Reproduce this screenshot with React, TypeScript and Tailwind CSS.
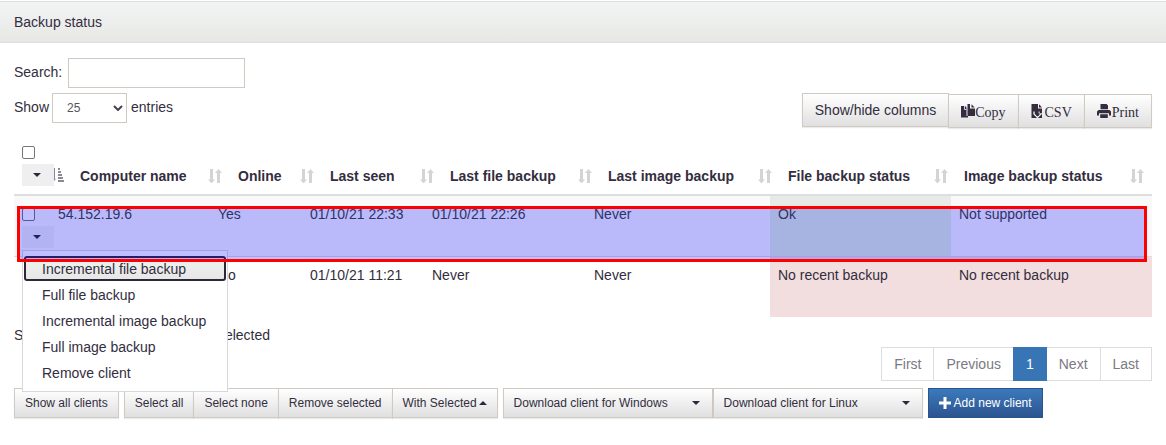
import type { ReactNode } from "react";

type Tone = "none" | "ok" | "alert";

interface Client {
  name: string;
  online: string;
  lastSeen: string;
  lastFile: string;
  lastImage: string;
  fileStatus: string;
  fileTone: Tone;
  imageStatus: string;
  imageTone: Tone;
}

const clients: Client[] = [
  {
    name: "54.152.19.6",
    online: "Yes",
    lastSeen: "01/10/21 22:33",
    lastFile: "01/10/21 22:26",
    lastImage: "Never",
    fileStatus: "Ok",
    fileTone: "ok",
    imageStatus: "Not supported",
    imageTone: "none",
  },
  {
    name: "",
    online: "No",
    lastSeen: "01/10/21 11:21",
    lastFile: "Never",
    lastImage: "Never",
    fileStatus: "No recent backup",
    fileTone: "alert",
    imageStatus: "No recent backup",
    imageTone: "alert",
  },
];

const headings = [
  "Computer name",
  "Online",
  "Last seen",
  "Last file backup",
  "Last image backup",
  "File backup status",
  "Image backup status",
];

const actions = [
  "Incremental file backup",
  "Full file backup",
  "Incremental image backup",
  "Full image backup",
  "Remove client",
];

const toneClass: Record<Tone, string> = {
  none: "",
  ok: "bg-linear-to-b from-[#e8eae7] from-[12px] to-[#dff0d8] to-[12px]",
  alert: "bg-[#f2dede]",
};

const raised =
  "border border-[#d0cac2] bg-linear-to-b from-white to-[#e0e0e0] shadow-[0_1px_1px_rgba(0,0,0,0.08)]";

function SortIcon() {
  return (
    <svg width="14" height="14" viewBox="0 0 14 14" fill="#d2d5d4" aria-hidden="true" className="shrink-0">
      <path d="M2 0h3v10.500h2L3.500 14.500 0 10.500h2z" />
      <path d="M9 14.500h3V4h2L10.500 0 7 4h2z" />
    </svg>
  );
}

function SortedIcon() {
  return (
    <svg width="14" height="14" viewBox="0 0 14 14" fill="#8d8791" aria-hidden="true" className="shrink-0">
      <path d="M4 0h1v11h1l-2 2z" />
      <path d="M8 0h2v2H8zM8 3h3v2H8zM8 6h4v2H8zM8 9h5v2H8zM8 12h6v2H8z" />
    </svg>
  );
}

function CopyIcon() {
  return (
    <svg width="14" height="14" viewBox="0 0 14 14" fill="#342d40" aria-hidden="true">
      <path d="M0 2h4l1.500 1.500V12H7v1.500H0z" />
      <path d="M6.500 0H9v4.500h5V12H6.500z" />
      <path d="M10.500 0.300L13.700 3.500h-3.200z" />
      <path d="M3.500 2v3.500H5.500" fill="none" stroke="#e8f0f8" strokeWidth="0.8" />
    </svg>
  );
}

function CsvIcon() {
  return (
    <svg width="14" height="14" viewBox="0 0 14 14" fill="#342d40" aria-hidden="true">
      <path d="M0.500 0H7v4.500h4V14H0.500z" />
      <path d="M8 0.300L11 3.500H8z" />
      <path
        d="M3 7.500v2.500l3.500 3.500L10 10h-2V7.500"
        fill="none"
        stroke="#f4f4f4"
        strokeWidth="1.3"
      />
      <path d="M5 7h2.500v2.500H9.500L6.500 12.500 3.800 9.500H5z" />
    </svg>
  );
}

function PrintIcon() {
  return (
    <svg width="15" height="14" viewBox="0 0 15 14" fill="#342d40" aria-hidden="true">
      <path d="M3.500 0h6L11 1.500V5.200H3.500zM1.500 6h11L14 7.500V11.500h-2V9.200H2v2.300H0V7.500zM3.200 10.200h7.600V14H3.200z" />
    </svg>
  );
}

function Caret({ up = false }: { up?: boolean }) {
  return (
    <svg width="8" height="4" viewBox="0 0 8 4" fill="#2c2838" aria-hidden="true" className="shrink-0">
      <path d={up ? "M0 4h8L4 0z" : "M0 0h8L4 4z"} />
    </svg>
  );
}

function RowTools({ label, tint }: { label: string; tint: string }) {
  return (
    <>
      <input
        type="checkbox"
        aria-label={`Select ${label}`}
        className="block size-[13px] shrink-0 appearance-none rounded-xs border border-[#767676] bg-white"
      />
      <button
        type="button"
        aria-label={`Actions for ${label}`}
        className={`flex h-[22px] w-8 shrink-0 items-center justify-center pr-0.5 ${tint}`}
      >
        <Caret />
      </button>
    </>
  );
}

function ToolButton({ icon, children }: { icon: ReactNode; children: ReactNode }) {
  return (
    <button
      type="button"
      className={`-ml-px flex h-[34px] items-center px-3 pt-1 font-['Liberation_Serif',serif] ${raised}`}
    >
      <span className="pb-1">{icon}</span>
      {children}
    </button>
  );
}

function SmallButton({ joined = false, children }: { joined?: boolean; children: ReactNode }) {
  return (
    <button
      type="button"
      className={`flex h-[30px] items-center px-2.5 text-xs ${raised} ${joined ? "-ml-px" : ""}`}
    >
      {children}
    </button>
  );
}

function DownloadButton({ children }: { children: ReactNode }) {
  return (
    <button
      type="button"
      className={`flex h-[30px] w-[210px] items-center justify-between pr-3 pl-2.5 text-xs ${raised}`}
    >
      {children}
      <Caret />
    </button>
  );
}

function ActionMenu() {
  return (
    <ul className="absolute top-[54px] left-2 z-10 w-[206px] border border-[#d5d7d9] bg-white py-[5px]">
      {actions.map((action, i) => (
        <li key={action} className="h-[26px]">
          <button
            type="button"
            className={
              i === 0
                ? "mx-px block h-[25px] w-[202px] rounded-[3px] border-2 border-[#2c2838] bg-linear-to-b from-[#f0f1f0] to-[#e6e8e6] pl-4 text-left leading-5"
                : "block h-[26px] w-full pl-[19px] text-left leading-[26px]"
            }
          >
            {action}
          </button>
        </li>
      ))}
    </ul>
  );
}

const headGrid =
  "grid grid-cols-[minmax(0,58fr)_minmax(0,158fr)_minmax(0,92fr)_minmax(0,120fr)_minmax(0,158fr)_minmax(0,180fr)_minmax(0,176fr)_minmax(0,196fr)]";
const bodyGrid =
  "grid grid-cols-[minmax(0,36fr)_minmax(0,160fr)_minmax(0,92fr)_minmax(0,122fr)_minmax(0,162fr)_minmax(0,184fr)_minmax(0,181fr)_minmax(0,201fr)]";

function ClientTable() {
  return (
    <div className="relative">
      <table className="block w-full">
        <thead className="block border-b-2 border-[#dcdfdf]">
          <tr className={headGrid}>
            <th className="flex items-end justify-between pr-2 pb-2 pl-2">
              <div className="flex flex-col gap-[5px]">
                <RowTools label="all clients" tint="bg-[#eeefee]" />
              </div>
              <span className="-ml-1 pb-1">
                <SortedIcon />
              </span>
            </th>
            {headings.map((heading) => (
              <th
                key={heading}
                scope="col"
                className="flex items-end justify-between px-2 pb-2 text-left font-bold whitespace-nowrap"
              >
                {heading}
                <span className="pb-[3px]">
                  <SortIcon />
                </span>
              </th>
            ))}
          </tr>
        </thead>
        <tbody className="block">
          {clients.map((client, i) => (
            <tr
              key={client.lastSeen}
              className={`${bodyGrid} ${i === 0 ? "h-[60px] bg-[#f9f9f9] text-[#3f4430]" : "h-[61px] border-t border-[#ddd]"}`}
            >
              <td className="flex flex-col gap-[5px] px-2 pt-3">
                <RowTools label={client.name} tint="bg-[#eeefee]" />
              </td>
              <td className="px-2 pt-2">{client.name}</td>
              <td className="px-2 pt-2">{client.online}</td>
              <td className="px-2 pt-2">{client.lastSeen}</td>
              <td className="px-2 pt-2">{client.lastFile}</td>
              <td className="px-2 pt-2">{client.lastImage}</td>
              <td className={`px-2 pt-2 ${toneClass[client.fileTone]}`}>{client.fileStatus}</td>
              <td className={`px-2 pt-2 ${toneClass[client.imageTone]}`}>{client.imageStatus}</td>
            </tr>
          ))}
        </tbody>
      </table>
      <div className="absolute inset-x-0 bottom-0 h-[121px]">
        <ActionMenu />
        <div className="pointer-events-none absolute top-2.5 right-[5px] left-[3px] z-20 h-14 border-3 border-[#fe0000] bg-[#0000ff]/25" />
      </div>
    </div>
  );
}

export default function App() {
  const pages = ["First", "Previous", "1", "Next", "Last"];
  return (
    <main className="min-h-screen bg-white pt-px font-['Liberation_Sans',Arial,sans-serif] text-sm leading-5 text-[#332d40]">
      <header className="border-y border-[#dcdfdf] bg-linear-to-b from-[#f2f4f3] to-[#e7e8e6] px-3.5 py-2.5">
        <h1>Backup status</h1>
      </header>

      <div className="px-3.5 pt-[15px]">
        <div className="flex items-start justify-between">
          <div className="flex flex-col gap-[5px]">
            <div className="flex items-start gap-1.5">
              <label htmlFor="search" className="pt-1">
                Search:
              </label>
              <input id="search" type="text" className="h-[30px] w-[177px] border border-[#cfc9c1] bg-white px-2" />
            </div>
            <label className="flex items-start gap-[3px]">
              <span className="pt-1">Show</span>
              <span className="relative flex items-center">
                <select
                  defaultValue="25"
                  className="h-[30px] w-[75px] appearance-none border border-[#cfc9c1] bg-white pl-3.5 text-xs text-[#555]"
                >
                  <option>10</option>
                  <option>25</option>
                  <option>50</option>
                </select>
                <svg
                  width="10"
                  height="6"
                  viewBox="0 0 10 6"
                  fill="none"
                  stroke="#474050"
                  strokeWidth="2"
                  aria-hidden="true"
                  className="pointer-events-none absolute right-1"
                >
                  <path d="M1 1l4 4 4-4" />
                </svg>
              </span>
              <span className="pt-1 pl-px">entries</span>
            </label>
          </div>
          <div className="flex items-start pt-[35px]">
            <button type="button" className={`h-[34px] px-3 ${raised}`}>
              Show/hide columns
            </button>
            <div className="flex pt-px">
              <ToolButton icon={<CopyIcon />}>Copy</ToolButton>
              <ToolButton icon={<CsvIcon />}>CSV</ToolButton>
              <ToolButton icon={<PrintIcon />}>Print</ToolButton>
            </div>
          </div>
        </div>

        <div className="pt-[18px]">
          <ClientTable />
        </div>

        <p className="flex pt-2">
          <span>Showing 1 to 2 of 2 entries</span>
          <span>1 row selected</span>
        </p>

        <nav aria-label="Pages" className="flex justify-end pt-0.5">
          {pages.map((page) => (
            <a
              key={page}
              href="#"
              className={`-ml-px border px-3 py-1.5 ${
                page === "1"
                  ? "z-10 border-[#3875b5] bg-[#3875b5] text-white"
                  : "border-[#ddd] bg-white text-[#7b7982]"
              }`}
            >
              {page}
            </a>
          ))}
        </nav>

        <div className="flex flex-wrap gap-[5px] pt-[7px]">
          <SmallButton>Show all clients</SmallButton>
          <div className="flex">
            <SmallButton>Select all</SmallButton>
            <SmallButton joined>Select none</SmallButton>
            <SmallButton joined>Remove selected</SmallButton>
            <SmallButton joined>
              <span className="pr-0.5">With Selected</span>
              <Caret up />
            </SmallButton>
          </div>
          <div className="flex">
            <DownloadButton>Download client for Windows</DownloadButton>
            <DownloadButton>Download client for Linux</DownloadButton>
          </div>
          <button
            type="button"
            className="flex h-[30px] items-center gap-[3px] border border-[#2c5590] bg-linear-to-b from-[#3b7abc] to-[#2d5490] px-2.5 text-xs text-white"
          >
            <svg width="12" height="12" viewBox="0 0 12 12" fill="#fff" aria-hidden="true">
              <path d="M4.500 0h3v4.500H12v3H7.500V12h-3V7.500H0v-3h4.500z" />
            </svg>
            Add new client
          </button>
        </div>
      </div>
    </main>
  );
}
